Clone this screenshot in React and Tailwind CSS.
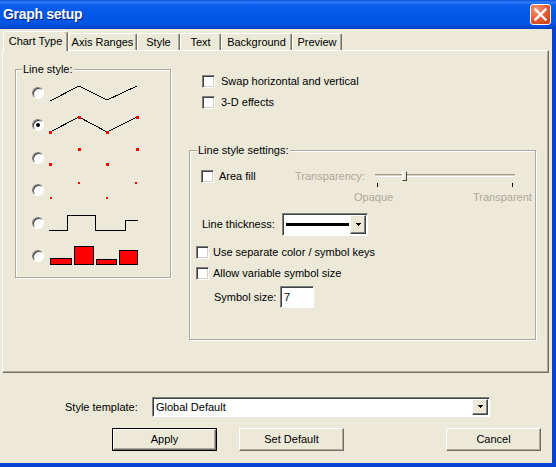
import React from "react";

function Checkbox() {
  return (
    <div className="w-[13px] h-[13px] shrink-0 bg-white border border-t-[#808080] border-l-[#808080] border-b-white border-r-white shadow-[inset_1px_1px_0_#404040,inset_-1px_-1px_0_#d4d0c8]" />
  );
}

function Radio({ checked }) {
  return (
    <div className="relative w-[12px] h-[12px] shrink-0 rounded-full bg-white border border-t-[#808080] border-l-[#808080] border-b-white border-r-white shadow-[inset_1px_1px_0_#404040]">
      {checked && <div className="absolute left-[3px] top-[3px] w-[4px] h-[4px] rounded-full bg-black" />}
    </div>
  );
}

function Arrow() {
  return (
    <svg width="7" height="4" viewBox="0 0 7 4" shapeRendering="crispEdges">
      <polygon points="0.5,0 6.5,0 3.5,3.5" fill="#000" />
    </svg>
  );
}

function DropBtn() {
  return (
    <div className="w-[16px] shrink-0 flex items-center justify-center bg-[#ECE9D8] border border-t-white border-l-white border-r-[#404040] border-b-[#404040] shadow-[inset_-1px_-1px_0_#808080]">
      <Arrow />
    </div>
  );
}

function GroupBox({ label, className, labelCls, children }) {
  return (
    <div className={"relative border border-[#ACA899] shadow-[1px_1px_0_#fff,inset_1px_1px_0_#fff] " + className}>
      <div className={"absolute top-[-8px] px-[1px] bg-[#ECE9D8] text-[11px] leading-[14px] whitespace-nowrap " + labelCls}>{label}</div>
      {children}
    </div>
  );
}

function Tab({ label, cls, selected }) {
  if (selected) {
    return (
      <div className={"relative z-10 -mb-px h-[20px] flex items-center justify-center pb-[1px] bg-[#ECE9D8] rounded-t-[3px] border-t border-l border-r border-t-white border-l-white border-r-[#716F64] shadow-[inset_-1px_0_0_#ACA899] text-[11px] " + cls}>
        {label}
      </div>
    );
  }
  return (
    <div className={"h-[17px] flex items-center justify-center pt-[1px] bg-[#ECE9D8] rounded-t-[2px] border-t border-l border-r border-t-white border-l-white border-r-[#716F64] shadow-[inset_-1px_0_0_#ACA899] text-[11px] " + cls}>
      {label}
    </div>
  );
}

function LineRow({ h, checked, children }) {
  return (
    <div className={"flex items-center pl-[16px] " + h}>
      <Radio checked={checked} />
      <svg className="ml-[4px]" width="92" height="100%" shapeRendering="crispEdges">
        {children}
      </svg>
    </div>
  );
}

const zig1 = [[2, 25], [31, 10], [59, 24], [89, 10]];
const zig2 = [[2, 23], [31, 8], [59, 23], [89, 8]];
const pts = (a) => a.map((p) => p.join(",")).join(" ");

export default function App() {
  return (
    <div className="w-[556px] h-[467px] flex flex-col bg-[#ECE9D8] text-black font-['Liberation_Sans',Arial,sans-serif] overflow-hidden">
      {/* title bar */}
      <div className="h-[29px] shrink-0 flex items-center justify-between pl-[3px] pr-[5px] bg-[linear-gradient(to_bottom,#0A4FD8_0%,#2F7DF8_7%,#0A5EEE_18%,#0058E8_50%,#0055E4_80%,#0049D2_94%,#003CBC_100%)]">
        <div className="text-white font-bold text-[14px] tracking-[-0.3px] [text-shadow:1px_1px_0_#0a1e80]">Graph setup</div>
        <div className="w-[21px] h-[21px] rounded-[3px] border border-white flex items-center justify-center bg-[radial-gradient(circle_at_30%_25%,#F39A78_0%,#E2582D_55%,#C53D16_100%)]">
          <svg width="13" height="13" viewBox="0 0 13 13">
            <path d="M1.5 1.5 L11.5 11.5 M11.5 1.5 L1.5 11.5" stroke="#fff" strokeWidth="2.4" strokeLinecap="square" />
          </svg>
        </div>
      </div>

      {/* body */}
      <div className="flex-1 flex flex-col border-r-4 border-b-4 border-[#0842D0] pt-[2px]">
        {/* tabs */}
        <div className="h-[19px] flex items-end pl-[3px]">
          <Tab label="Chart Type" cls="w-[65px]" selected />
          <Tab label="Axis Ranges" cls="w-[69px]" />
          <Tab label="Style" cls="w-[43px]" />
          <Tab label="Text" cls="w-[41px]" />
          <Tab label="Background" cls="w-[71px]" />
          <Tab label="Preview" cls="w-[50px]" />
        </div>

        {/* panel */}
        <div className="ml-[2px] w-[547px] h-[323px] border border-t-white border-l-white border-r-[#716F64] border-b-[#716F64] shadow-[inset_-1px_-1px_0_#ACA899] pt-[18px] pl-[12px] flex items-start text-[11px]">
          {/* line style group */}
          <GroupBox label="Line style:" className="w-[156px] h-[209px] shrink-0" labelCls="left-[6px]">
            <div className="pt-[6px] flex flex-col">
              <LineRow h="h-[33px]">
                <polyline points={pts(zig1)} fill="none" stroke="#000" strokeWidth="1" />
              </LineRow>
              <LineRow h="h-[32px]" checked>
                <polyline points={pts(zig2)} fill="none" stroke="#000" strokeWidth="1" />
                {zig2.map((p, i) => (
                  <rect key={i} x={p[0] - 1.5} y={p[1] - 1.5} width="3" height="3" fill="#FF0000" />
                ))}
              </LineRow>
              <LineRow h="h-[33px]">
                {zig2.map((p, i) => (
                  <rect key={i} x={p[0] - 1.5} y={p[1] - 1.5} width="3" height="3" fill="#FF0000" />
                ))}
              </LineRow>
              <LineRow h="h-[32px]">
                {[[31, 9], [88, 9], [3, 24], [59, 24]].map((p, i) => (
                  <rect key={i} x={p[0] - 1} y={p[1] - 1} width="2" height="2" fill="#FF0000" />
                ))}
              </LineRow>
              <LineRow h="h-[33px]">
                <polyline
                  points="1,24.5 19.5,24.5 19.5,9.5 47.5,9.5 47.5,24.5 77.5,24.5 77.5,14.5 90,14.5"
                  fill="none"
                  stroke="#000"
                  strokeWidth="1.3"
                />
              </LineRow>
              <LineRow h="h-[33px]">
                <rect x="2.5" y="19.5" width="21" height="6" fill="#FF0000" stroke="#000" strokeWidth="1.2" />
                <rect x="26.5" y="7.5" width="19" height="18" fill="#FF0000" stroke="#000" strokeWidth="1.2" />
                <rect x="48.5" y="20.5" width="20" height="5" fill="#FF0000" stroke="#000" strokeWidth="1.2" />
                <rect x="71.5" y="11.5" width="18" height="14" fill="#FF0000" stroke="#000" strokeWidth="1.2" />
              </LineRow>
            </div>
          </GroupBox>

          {/* right column */}
          <div className="ml-[18px] flex flex-col">
            <div className="mt-[2px] h-[21px] flex items-center pl-[13px] gap-[6px]">
              <Checkbox />
              <span>Swap horizontal and vertical</span>
            </div>
            <div className="h-[21px] flex items-center pl-[13px] gap-[6px]">
              <Checkbox />
              <span>3-D effects</span>
            </div>

            <GroupBox label="Line style settings:" className="mt-[37px] w-[347px] h-[190px]" labelCls="left-[7px]">
              <div className="flex flex-col">
                {/* area fill + transparency */}
                <div className="mt-[19px] h-[17px] flex items-start">
                  <div className="w-[105px] pl-[11px] flex items-center">
                    <Checkbox />
                    <span className="ml-[5px] leading-[13px]">Area fill</span>
                  </div>
                  <div className="w-[80px] leading-[13px] text-[#ACA899]">Transparency:</div>
                  <div className="w-[140px] flex flex-col">
                    <div className="relative h-[12px]">
                      <div className="absolute left-0 right-0 top-[4px] h-[3px] border-t border-t-[#9D9A8C] border-b border-b-white bg-[#D8D4C4]" />
                      <div className="absolute left-[27px] top-[1px] w-[5px] h-[10px] bg-[#ECE9D8] border border-t-white border-l-white border-r-[#404040] border-b-[#404040]" />
                    </div>
                    <div className="mt-[1px] h-[4px] flex justify-between px-[2px]">
                      <div className="w-[1px] h-[4px] bg-black" />
                      <div className="w-[1px] h-[4px] bg-black" />
                    </div>
                  </div>
                </div>
                <div className="mt-[4px] h-[13px] flex items-center pl-[164px] text-[#ACA899] leading-[13px]">
                  <div className="w-[119px]">Opaque</div>
                  <div>Transparent</div>
                </div>

                {/* line thickness */}
                <div className="mt-[9px] h-[23px] flex items-center pl-[12px]">
                  <div className="w-[80px]">Line thickness:</div>
                  <div className="w-[86px] h-[23px] flex p-[1px] bg-white border border-t-[#808080] border-l-[#808080] border-b-white border-r-white shadow-[inset_1px_1px_0_#404040]">
                    <div className="flex-1 flex items-center pl-[2px] pr-[1px]">
                      <div className="w-full h-[3px] bg-black" />
                    </div>
                    <DropBtn />
                  </div>
                </div>

                <div className="mt-[10px] h-[13px] flex items-center pl-[6px]">
                  <Checkbox />
                  <span className="ml-[4px]">Use separate color / symbol keys</span>
                </div>
                <div className="mt-[8px] h-[13px] flex items-center pl-[6px]">
                  <Checkbox />
                  <span className="ml-[4px]">Allow variable symbol size</span>
                </div>

                <div className="mt-[6px] h-[22px] flex items-center pl-[24px]">
                  <div className="w-[66px]">Symbol size:</div>
                  <div className="w-[34px] h-[22px] flex items-center pl-[3px] bg-white border border-t-[#808080] border-l-[#808080] border-b-white border-r-white shadow-[inset_1px_1px_0_#404040]">
                    7
                  </div>
                </div>
              </div>
            </GroupBox>
          </div>
        </div>

        {/* style template */}
        <div className="mt-[24px] h-[20px] flex items-center pl-[65px] text-[11px]">
          <div className="w-[87px]">Style template:</div>
          <div className="w-[338px] h-[20px] flex p-[1px] bg-white border border-t-[#808080] border-l-[#808080] border-b-white border-r-white shadow-[inset_1px_1px_0_#404040]">
            <div className="flex-1 flex items-center pl-[2px]">Global Default</div>
            <DropBtn />
          </div>
        </div>

        {/* buttons */}
        <div className="mt-[11px] h-[23px] flex items-center pl-[112px] text-[11px]">
          <div className="w-[105px] h-[23px] flex border border-black">
            <div className="flex-1 flex items-center justify-center bg-[#ECE9D8] border border-t-white border-l-white border-r-[#716F64] border-b-[#716F64] shadow-[inset_-1px_-1px_0_#ACA899]">
              Apply
            </div>
          </div>
          <div className="ml-[22px] w-[105px] h-[23px] flex items-center justify-center bg-[#ECE9D8] border border-t-white border-l-white border-r-[#716F64] border-b-[#716F64] shadow-[inset_-1px_-1px_0_#ACA899]">
            Set Default
          </div>
          <div className="ml-[102px] w-[95px] h-[23px] flex items-center justify-center bg-[#ECE9D8] border border-t-white border-l-white border-r-[#716F64] border-b-[#716F64] shadow-[inset_-1px_-1px_0_#ACA899]">
            Cancel
          </div>
        </div>
      </div>
    </div>
  );
}
